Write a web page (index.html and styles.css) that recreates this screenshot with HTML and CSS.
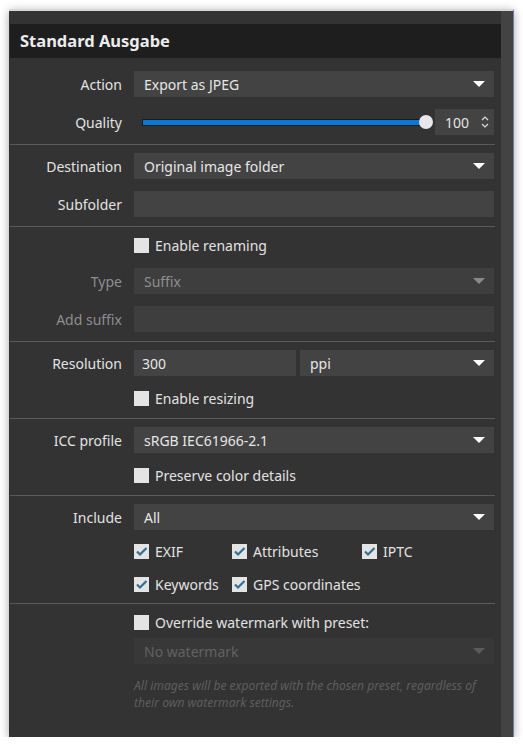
FILE: index.html
```html
<!DOCTYPE html>
<html>
<head>
<meta charset="utf-8">
<link rel="stylesheet" href="styles.css">
</head>
<body>
<div class="window">
  <div class="content">
    <div class="header">Standard Ausgabe</div>

    <div class="sec first">
      <div class="row">
        <div class="label">Action</div>
        <div class="select"><span>Export as JPEG</span><i class="arrow"></i></div>
      </div>
      <div class="row">
        <div class="label">Quality</div>
        <div class="quality">
          <div class="slider"><div class="track"></div><div class="thumb"></div></div>
          <div class="num"><span>100</span>
            <svg class="spin" width="8" height="14" viewBox="0 0 8 14"><path d="M1 5 L4 2 L7 5 M1 9 L4 12 L7 9" fill="none" stroke="#dcdcdc" stroke-width="1.2"/></svg>
          </div>
        </div>
      </div>
    </div>

    <div class="sec">
      <div class="row">
        <div class="label">Destination</div>
        <div class="select"><span>Original image folder</span><i class="arrow"></i></div>
      </div>
      <div class="row">
        <div class="label">Subfolder</div>
        <div class="input"></div>
      </div>
    </div>

    <div class="sec">
      <div class="row check-row">
        <div class="label"></div>
        <label class="cb"><span class="box"></span>Enable renaming</label>
      </div>
      <div class="row disabled">
        <div class="label">Type</div>
        <div class="select"><span>Suffix</span><i class="arrow"></i></div>
      </div>
      <div class="row disabled">
        <div class="label">Add suffix</div>
        <div class="input"></div>
      </div>
    </div>

    <div class="sec">
      <div class="row">
        <div class="label">Resolution</div>
        <div class="split">
          <div class="input res"><span>300</span></div>
          <div class="select"><span>ppi</span><i class="arrow"></i></div>
        </div>
      </div>
      <div class="row check-row">
        <div class="label"></div>
        <label class="cb"><span class="box"></span>Enable resizing</label>
      </div>
    </div>

    <div class="sec">
      <div class="row">
        <div class="label">ICC profile</div>
        <div class="select"><span>sRGB IEC61966-2.1</span><i class="arrow"></i></div>
      </div>
      <div class="row check-row">
        <div class="label"></div>
        <label class="cb"><span class="box"></span>Preserve color details</label>
      </div>
    </div>

    <div class="sec">
      <div class="row">
        <div class="label">Include</div>
        <div class="select"><span>All</span><i class="arrow"></i></div>
      </div>
      <div class="row meta-row">
        <div class="label"></div>
        <div class="meta">
          <label class="cb"><span class="box checked"><svg width="15" height="15" viewBox="0 0 15 15"><path d="M3 7.5 L6 10.5 L12.5 4" fill="none" stroke="#336e94" stroke-width="2.2"/></svg></span>EXIF</label>
          <label class="cb"><span class="box checked"><svg width="15" height="15" viewBox="0 0 15 15"><path d="M3 7.5 L6 10.5 L12.5 4" fill="none" stroke="#336e94" stroke-width="2.2"/></svg></span>Attributes</label>
          <label class="cb"><span class="box checked"><svg width="15" height="15" viewBox="0 0 15 15"><path d="M3 7.5 L6 10.5 L12.5 4" fill="none" stroke="#336e94" stroke-width="2.2"/></svg></span>IPTC</label>
          <label class="cb"><span class="box checked"><svg width="15" height="15" viewBox="0 0 15 15"><path d="M3 7.5 L6 10.5 L12.5 4" fill="none" stroke="#336e94" stroke-width="2.2"/></svg></span>Keywords</label>
          <label class="cb"><span class="box checked"><svg width="15" height="15" viewBox="0 0 15 15"><path d="M3 7.5 L6 10.5 L12.5 4" fill="none" stroke="#336e94" stroke-width="2.2"/></svg></span>GPS coordinates</label>
        </div>
      </div>
    </div>

    <div class="sec last">
      <div class="row check-row">
        <div class="label"></div>
        <label class="cb"><span class="box"></span>Override watermark with preset:</label>
      </div>
      <div class="row faded tight">
        <div class="label"></div>
        <div class="select"><span>No watermark</span><i class="arrow"></i></div>
      </div>
      <div class="row note-row">
        <div class="label"></div>
        <p class="note">All images will be exported with the chosen preset, regardless of their own watermark settings.</p>
      </div>
    </div>
  </div>
  <div class="scrollbar"></div>
</div>
</body>
</html>
```
FILE: styles.css
```css
html, body {
  margin: 0;
  padding: 0;
  background: #ffffff;
}
body {
  font-family: "Noto Sans", "Segoe UI", sans-serif;
  font-size: 14px;
  color: #e4e4e4;
}
.window {
  margin: 9px 0 0 9px;
  width: 505px;
  height: 728px;
  box-sizing: border-box;
  display: flex;
  background: #333333;
  border-top: 2px solid #d8d8d8;
  border-right: 1px solid #6c7fa0;
  box-shadow: 0 2px 9px rgba(0, 0, 0, 0.35);
}
.content {
  flex: 1;
  padding-top: 13px;
  padding-left: 1px;
}
.scrollbar {
  width: 12px;
  background: #434343;
}
.header {
  height: 34px;
  background: #1e1e1f;
  color: #ececec;
  font-weight: 700;
  font-size: 16.5px;
  line-height: 34px;
  padding-left: 10px;
}
.sec {
  display: flex;
  flex-direction: column;
  gap: 12px;
  padding: 8px 0 9px;
  margin-right: 6px;
  border-bottom: 1px solid #5a5a5a;
}
.sec.first {
  padding-top: 13px;
}
.sec.last {
  border-bottom: none;
}
.row {
  display: flex;
  align-items: center;
  gap: 12px;
  height: 26px;
}
.row.check-row {
  height: 21px;
}
.row.tight {
  margin-top: -7px;
}
.label {
  width: 112px;
  flex: none;
  text-align: right;
  color: #e2e2e2;
}
.select, .input {
  flex: 1;
  height: 26px;
  background: #434343;
  display: flex;
  align-items: center;
  padding: 0 8px 0 10px;
  box-sizing: border-box;
  color: #e6e6e6;
  margin-right: 1px;
}
.select span {
  flex: 1;
}
.arrow {
  width: 0;
  height: 0;
  border-left: 6px solid transparent;
  border-right: 6px solid transparent;
  border-top: 6px solid #ffffff;
  margin-right: 1px;
}
.disabled .label { color: #8e8e8e; }
.disabled .select, .disabled .input { background: #3e3e3e; color: #8f8f8f; }
.disabled .arrow { border-top-color: #8a8a8a; }
.faded .select { background: #383838; color: #626262; }
.faded .arrow { border-top-color: #5a5a5a; }

.quality {
  flex: 1;
  display: flex;
  align-items: center;
  height: 26px;
  margin-right: 1px;
}
.slider {
  flex: 1;
  position: relative;
  height: 16px;
  display: flex;
  align-items: center;
  padding-left: 8px;
  margin-right: 2px;
}
.track {
  flex: 1;
  height: 5px;
  background: #0a78d7;
  border: 1px solid #1a1a1a;
  border-right: none;
}
.thumb {
  width: 14px;
  height: 14px;
  border-radius: 50%;
  background: #e7e7ec;
  margin-left: -6px;
  position: relative;
}
.num {
  width: 59px;
  height: 26px;
  background: #434343;
  display: flex;
  align-items: center;
  justify-content: space-between;
  padding: 0 5px 0 10px;
  box-sizing: border-box;
}
.split {
  flex: 1;
  display: flex;
  gap: 4px;
}
.input.res {
  flex: none;
  width: 162px;
  padding-left: 8px;
  margin-right: 0;
}
.cb {
  display: flex;
  align-items: center;
  gap: 6px;
  white-space: nowrap;
  color: #e2e2e2;
}
.box {
  width: 15px;
  height: 15px;
  background: #e4e4e4;
  flex: none;
  display: block;
}
.box svg { display: block; }
.meta {
  display: grid;
  grid-template-columns: 98px 130px auto;
  row-gap: 14px;
}
.row.meta-row {
  height: auto;
}
.note-row {
  height: auto;
  align-items: flex-start;
  margin-top: 1px;
}
.note {
  margin: 0;
  font-style: italic;
  font-size: 12.1px;
  line-height: 17px;
  color: #5e5e5e;
  width: 360px;
}
```
